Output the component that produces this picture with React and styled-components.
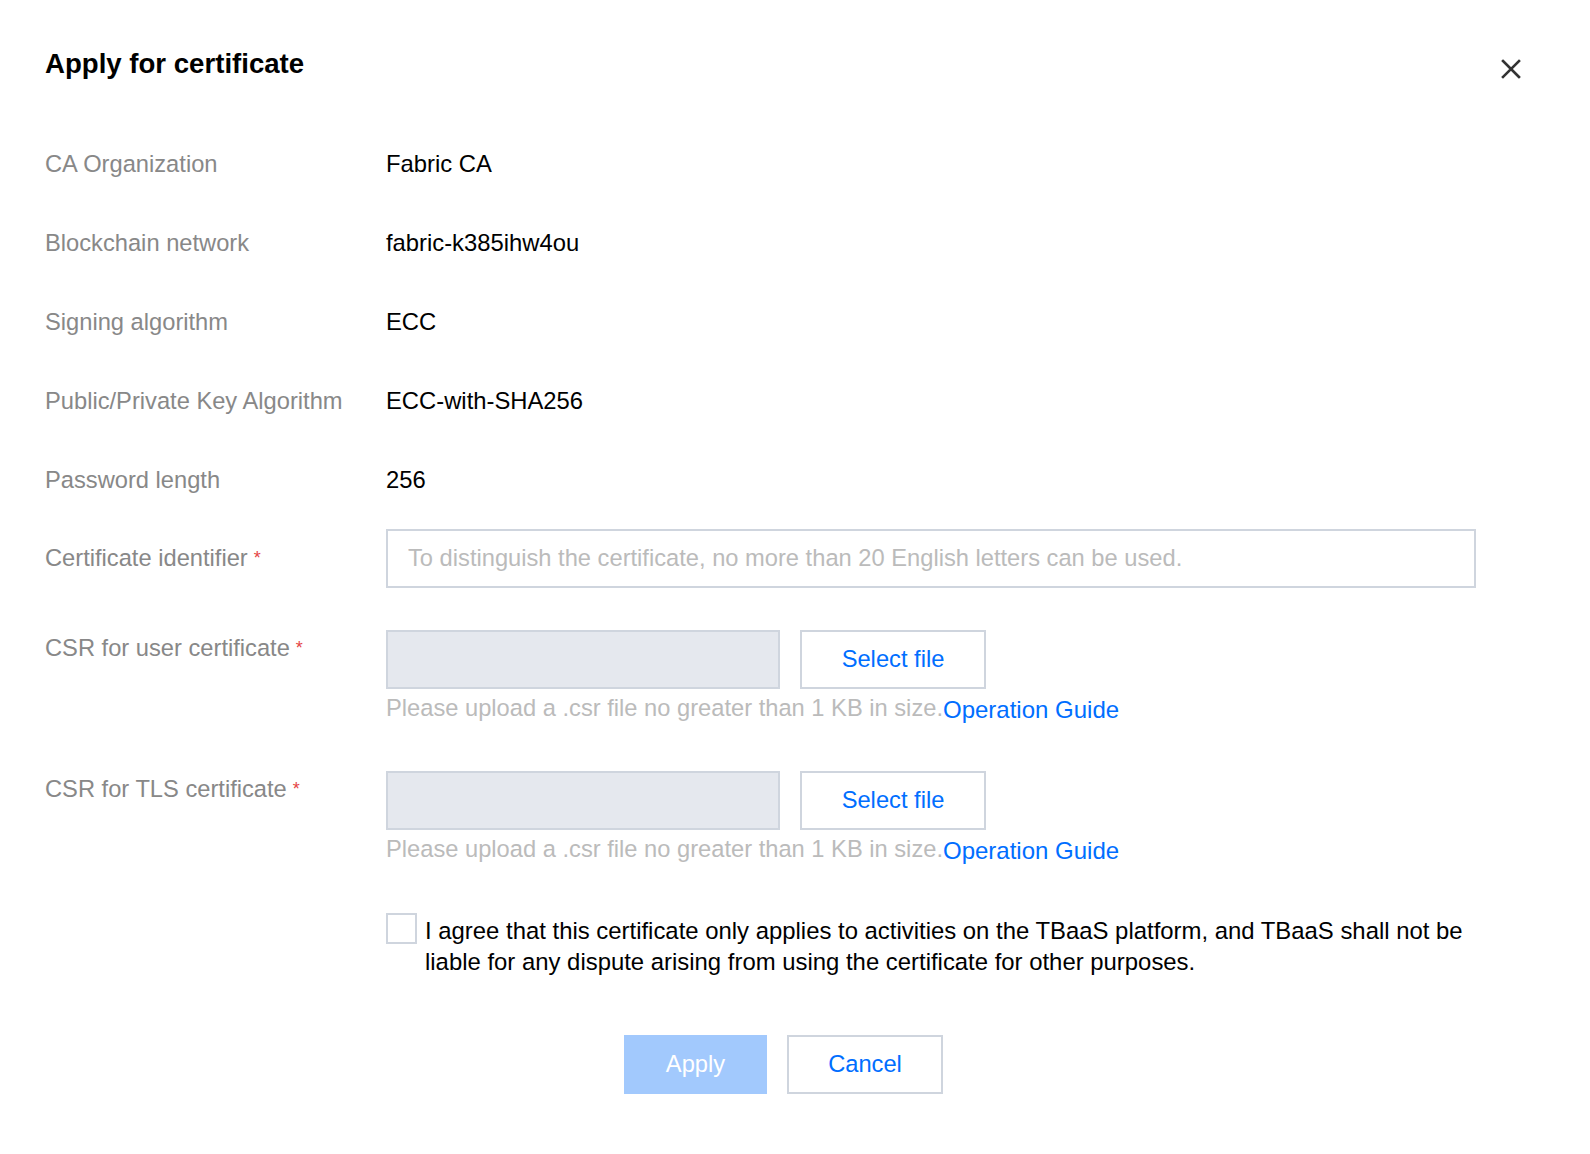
import React from "react";
import styled, { createGlobalStyle } from "styled-components";

const GlobalStyle = createGlobalStyle`
  html, body {
    margin: 0;
    padding: 0;
    background: #fff;
  }
  body {
    font-family: "Liberation Sans", Arial, Helvetica, sans-serif;
    -webkit-font-smoothing: antialiased;
  }
`;

const Dialog = styled.div`
  width: 1590px;
  min-height: 1154px;
  box-sizing: border-box;
  padding: 48px 68px 0 45px;
  position: relative;
  background: #fff;
`;

const Title = styled.h2`
  margin: 0;
  font-size: 27.6px;
  line-height: 32px;
  font-weight: 700;
  color: #000;
`;

const CloseButton = styled.button`
  position: absolute;
  top: 56px;
  right: 66px;
  width: 26px;
  height: 26px;
  padding: 0;
  border: none;
  background: transparent;
  cursor: pointer;
  display: flex;
  align-items: center;
  justify-content: center;
`;

const Form = styled.div`
  margin-top: 44px;
  display: flex;
  flex-direction: column;
`;

const Row = styled.div`
  display: grid;
  grid-template-columns: 341px 1fr;
  align-items: ${(p) => (p.$top ? "start" : "center")};
  min-height: ${(p) => (p.$top ? "auto" : "79px")};
  margin-top: ${(p) => p.$mt || 0}px;
`;

const Label = styled.div`
  font-size: 23.7px;
  line-height: 36px;
  color: #888;
  white-space: nowrap;
`;

const Required = styled.span`
  color: #e54545;
  font-size: 18px;
  margin-left: 6px;
  position: relative;
  top: -2px;
`;

const Value = styled.div`
  font-size: 23.8px;
  line-height: 36px;
  color: #000;
`;

const TextInput = styled.input`
  box-sizing: border-box;
  width: 1090px;
  height: 59px;
  border: 2px solid #cfd5de;
  padding: 0 20px;
  font-family: inherit;
  font-size: 23.7px;
  color: #000;
  outline: none;
  &::placeholder {
    color: #bbb;
  }
`;

const UploadLine = styled.div`
  display: flex;
  gap: 20px;
`;

const FileBox = styled.div`
  box-sizing: border-box;
  width: 394px;
  height: 59px;
  background: #e5e8ee;
  border: 2px solid #cfd5de;
`;

const SecondaryButton = styled.button`
  box-sizing: border-box;
  width: ${(p) => p.$w || 186}px;
  height: 59px;
  border: 2px solid #cfd5de;
  background: #fff;
  color: #006eff;
  font-family: inherit;
  font-size: 23.7px;
  cursor: pointer;
`;

const Hint = styled.div`
  margin-top: 1px;
  font-size: 23.7px;
  line-height: 36px;
  color: #bbb;
  white-space: nowrap;
`;

const Link = styled.a`
  color: #006eff;
  font-size: 24px;
  text-decoration: none;
  position: relative;
  top: 2px;
  cursor: pointer;
`;

const AgreeRow = styled.label`
  display: flex;
  gap: 8px;
  align-items: flex-start;
  cursor: pointer;
`;

const CheckBox = styled.span`
  flex: none;
  box-sizing: border-box;
  width: 31px;
  height: 31px;
  border: 2px solid #cfd5de;
  background: #fff;
`;

const AgreeText = styled.div`
  font-size: 23.9px;
  line-height: 31px;
  color: #000;
  margin-top: 2px;
`;

const Footer = styled.div`
  margin-top: 58px;
  display: flex;
  justify-content: center;
  gap: 20px;
`;

const PrimaryButton = styled.button`
  box-sizing: border-box;
  width: 143px;
  height: 59px;
  border: none;
  background: #a2c9fd;
  color: #fff;
  font-family: inherit;
  font-size: 23.7px;
  cursor: not-allowed;
`;

const info = [
  ["CA Organization", "Fabric CA"],
  ["Blockchain network", "fabric-k385ihw4ou"],
  ["Signing algorithm", "ECC"],
  ["Public/Private Key Algorithm", "ECC-with-SHA256"],
  ["Password length", "256"],
];

const Upload = ({ label, mt }) => (
  <Row $top $mt={mt}>
    <Label>
      {label}
      <Required>*</Required>
    </Label>
    <div>
      <UploadLine>
        <FileBox />
        <SecondaryButton>Select file</SecondaryButton>
      </UploadLine>
      <Hint>
        Please upload a .csr file no greater than 1 KB in size.
        <Link>Operation Guide</Link>
      </Hint>
    </div>
  </Row>
);

const App = () => (
  <>
    <GlobalStyle />
    <Dialog>
      <Title>Apply for certificate</Title>
      <CloseButton aria-label="Close">
        <svg width="22" height="22" viewBox="0 0 22 22">
          <path
            d="M3 3L19 19M19 3L3 19"
            stroke="#333"
            strokeWidth="2.6"
            strokeLinecap="square"
          />
        </svg>
      </CloseButton>
      <Form>
        {info.map(([k, v]) => (
          <Row key={k}>
            <Label>{k}</Label>
            <Value>{v}</Value>
          </Row>
        ))}
        <Row>
          <Label>
            Certificate identifier
            <Required>*</Required>
          </Label>
          <TextInput placeholder="To distinguish the certificate, no more than 20 English letters can be used." />
        </Row>
        <Upload label="CSR for user certificate" mt={32} />
        <Upload label="CSR for TLS certificate" mt={45} />
        <Row $top $mt={46}>
          <div />
          <AgreeRow>
            <CheckBox />
            <AgreeText>
              I agree that this certificate only applies to activities on the
              TBaaS platform, and TBaaS shall not be
              <br />
              liable for any dispute arising from using the certificate for
              other purposes.
            </AgreeText>
          </AgreeRow>
        </Row>
        <Footer>
          <PrimaryButton>Apply</PrimaryButton>
          <SecondaryButton $w={156}>Cancel</SecondaryButton>
        </Footer>
      </Form>
    </Dialog>
  </>
);

export default App;
